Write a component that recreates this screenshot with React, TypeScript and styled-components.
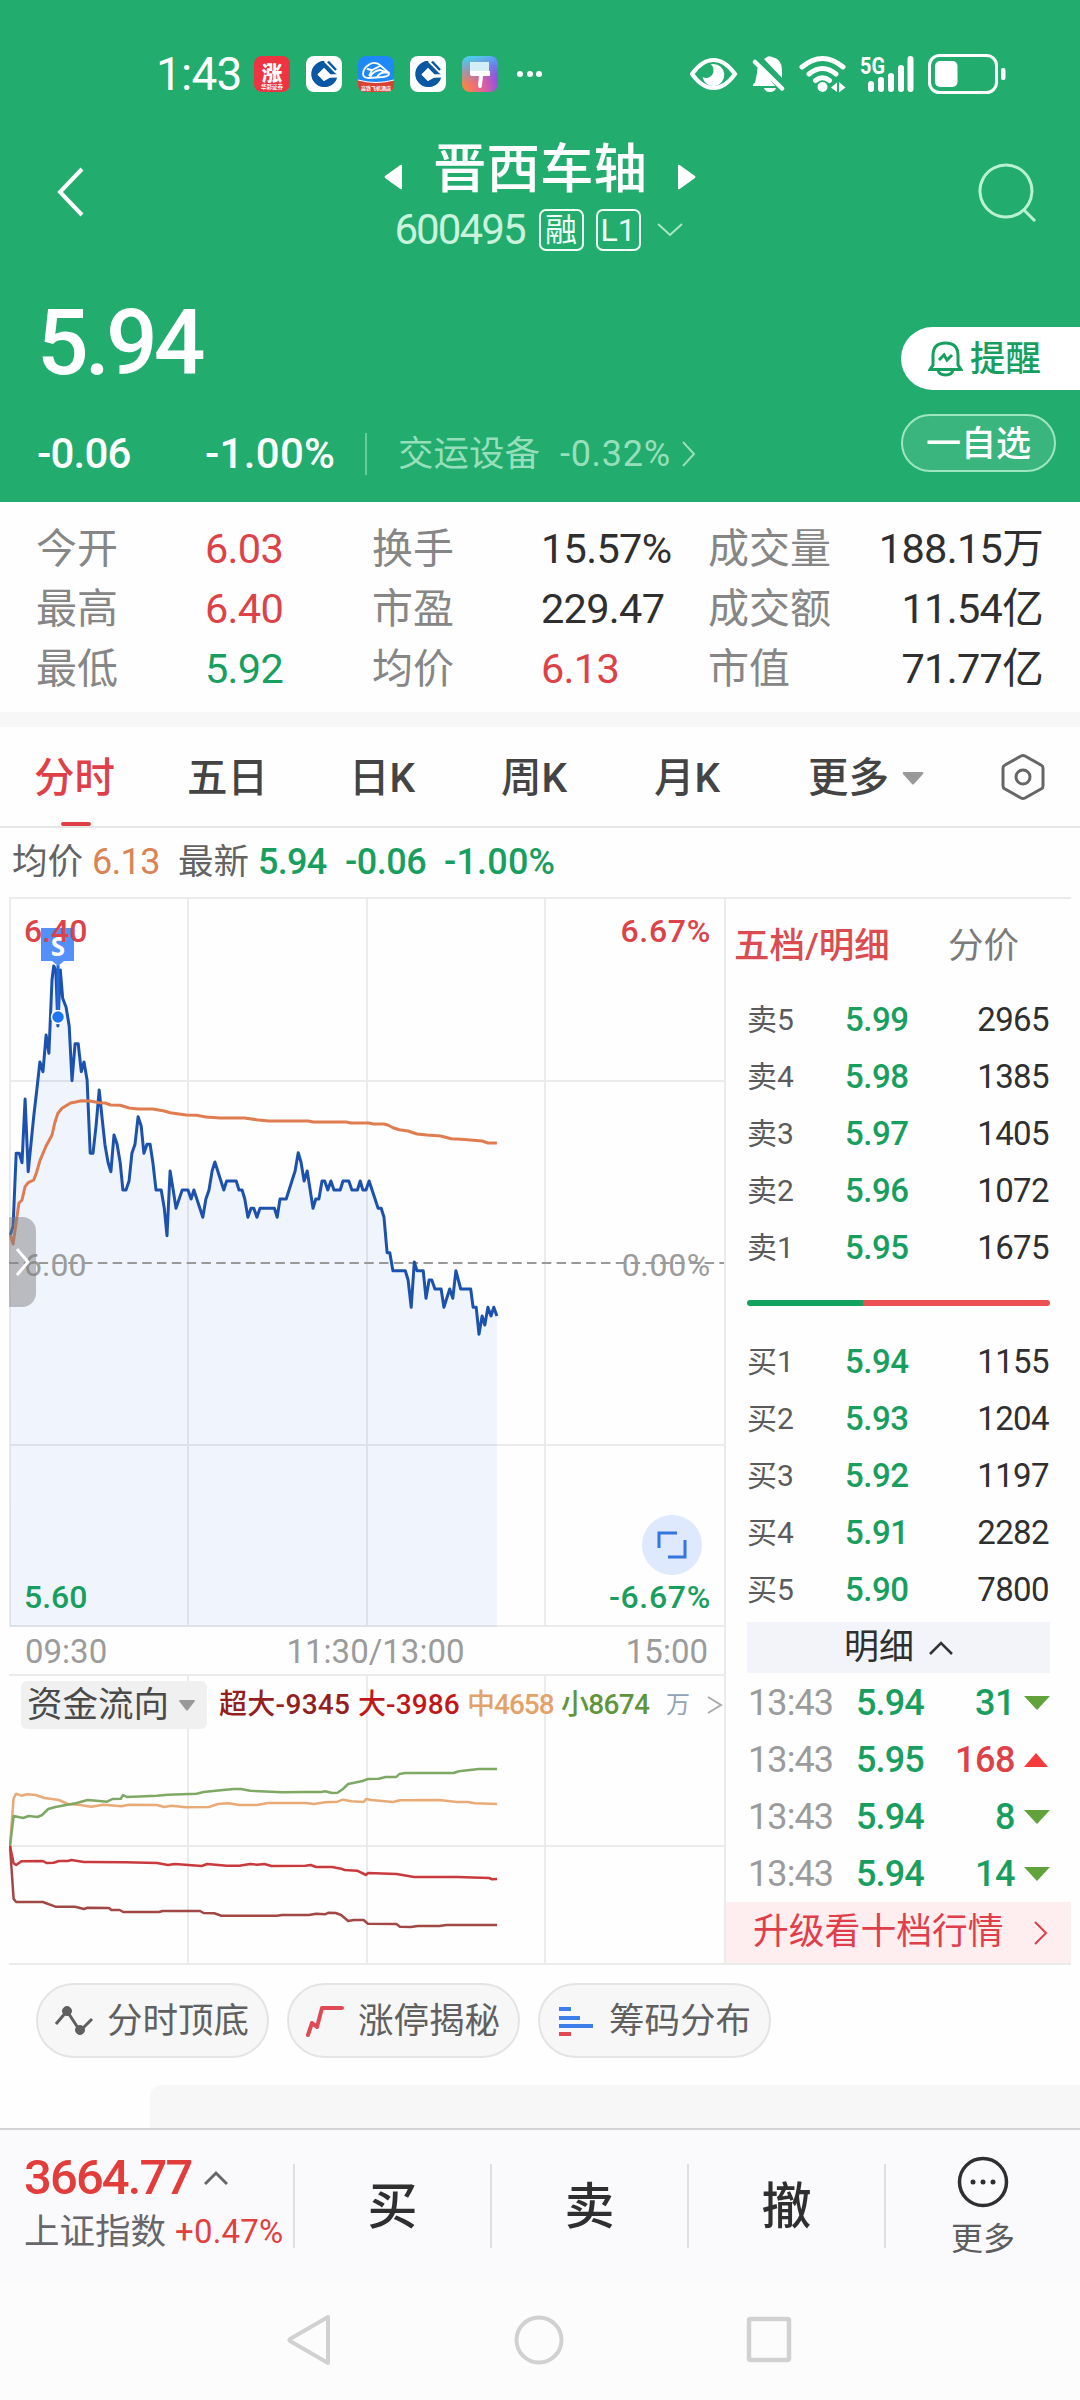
import React from "react";
import styled, { createGlobalStyle } from "styled-components";

const c = {
  green: "#22ac6e",
  down: "#189f5f",
  up: "#dc4248",
  text: "#2f2f2f",
  gray: "#868686",
  light: "#9b9b9b",
  line: "#ebebeb",
  mint: "#97dfba",
};

const Global = createGlobalStyle`
  * { box-sizing: border-box; }
  body { margin: 0; background: #fdfdfd; }
  svg { display: block; flex: none; }
`;

const Screen = styled.div`
  width: 1080px;
  height: 2400px;
  overflow: hidden;
  display: flex;
  flex-direction: column;
  background: #fefefe;
  color: ${c.text};
  font-family: Roboto, "Noto Sans CJK SC", sans-serif;
  white-space: nowrap;
`;

/* text run with the few things that vary between uses */
const T = styled.span<{ $s: number; $c?: string; $w?: number; $ls?: number; $width?: number; $ml?: number }>`
  flex: none;
  font-size: ${(p) => p.$s}px;
  color: ${(p) => p.$c ?? "inherit"};
  font-weight: ${(p) => p.$w ?? 400};
  letter-spacing: ${(p) => p.$ls ?? 0}px;
  width: ${(p) => (p.$width ? p.$width + "px" : "auto")};
  margin-left: ${(p) => p.$ml ?? 0}px;
`;

/* ---------- header ---------- */
const Header = styled.header`
  height: 502px;
  flex: none;
  background: ${c.green};
  color: #fff;
  display: flex;
  flex-direction: column;
`;
const StatusBar = styled.div`
  height: 96px;
  margin-top: 26px;
  padding: 0 74px 0 156px;
  display: flex;
  align-items: center;
  justify-content: space-between;
`;
const Group = styled.div<{ $gap?: number }>`
  display: flex;
  align-items: center;
  gap: ${(p) => p.$gap ?? 0}px;
`;
const AppIcons = styled(Group)`
  margin-left: 12px;
`;
const TitleBar = styled.div`
  height: 140px;
  padding: 0 42px 0 56px;
  display: flex;
  align-items: center;
  justify-content: space-between;
`;
const TitleBlock = styled.div`
  display: flex;
  flex-direction: column;
  align-items: center;
  margin-left: 18px;
  padding-top: 5px;
`;
const NameRow = styled.div`
  display: flex;
  align-items: center;
  gap: 31px;
  height: 74px;
  line-height: 74px;
  svg { margin-top: 14px; }
`;
const CodeRow = styled.div`
  display: flex;
  align-items: center;
  height: 46px;
  line-height: 44px;
  margin: 0 3px 4px 0;
`;
const Tag = styled.span<{ $ml: number }>`
  width: 45px;
  height: 42px;
  margin-left: ${(p) => p.$ml}px;
  border: 2px solid #effff6;
  border-radius: 7px;
  font-size: 32px;
  line-height: 38px;
  text-align: center;
  color: #effff6;
`;
const Quote = styled.div`
  display: flex;
  justify-content: space-between;
  height: 240px;
`;
const QuoteLeft = styled.div`
  padding-left: 37px;
  display: flex;
  flex-direction: column;
`;
const Price = styled.div`
  font-size: 91px;
  font-weight: 500;
  line-height: 100px;
  letter-spacing: -4px;
  margin-top: 31px;
`;
const ChangeRow = styled.div`
  display: flex;
  align-items: center;
  height: 60px;
  line-height: 60px;
  margin-top: 31px;
`;
const Divider = styled.i<{ $h: number; $c: string; $mr?: number }>`
  flex: none;
  width: 2px;
  height: ${(p) => p.$h}px;
  background: ${(p) => p.$c};
  margin-right: ${(p) => p.$mr ?? 0}px;
`;
const QuoteActions = styled.div`
  width: 179px;
  padding-top: 65px;
  display: flex;
  flex-direction: column;
  gap: 24px;
`;
const RemindButton = styled.div`
  height: 63px;
  border-radius: 32px 0 0 32px;
  background: #fff;
  color: ${c.down};
  display: flex;
  align-items: center;
  padding-left: 27px;
  gap: 7px;
  font-size: 35.5px;
  font-weight: 500;
  line-height: 66px;
`;
const WatchButton = styled.div`
  width: 155px;
  height: 58px;
  border: 2px solid #9ee6c0;
  border-radius: 29px;
  background: #39b57d;
  font-size: 35px;
  font-weight: 500;
  line-height: 57px;
  text-align: center;
`;

/* ---------- stats ---------- */
const Stats = styled.section`
  height: 210px;
  flex: none;
  padding: 16px 37px 0 36px;
  display: grid;
  grid-template-columns: 168px 168px 168px 168px 335px;
  grid-auto-rows: 60px;
  line-height: 62px;
  font-size: 41px;
`;
const Label = styled.span`
  color: ${c.gray};
`;
const Value = styled.span<{ $c?: string }>`
  color: ${(p) => p.$c ?? c.text};
  font-size: 41.5px;
  letter-spacing: -0.7px;
  padding-left: 1px;
`;
const LastPair = styled.div`
  display: flex;
  justify-content: space-between;
`;
const Gap = styled.div`
  height: 15px;
  flex: none;
  background: #f7f7f7;
`;

/* ---------- tabs ---------- */
const Tabs = styled.nav`
  height: 101px;
  flex: none;
  border-bottom: 2px solid #e6e6e6;
  display: flex;
  align-items: center;
  padding-left: 34px;
  font-size: 40.5px;
  line-height: 99px;
  color: #444;
  font-weight: 500;
`;
const Tab = styled.span<{ $w: number; $active?: boolean }>`
  flex: none;
  width: ${(p) => p.$w}px;
  height: 99px;
  display: flex;
  align-items: center;
  gap: 13px;
  position: relative;
  padding-top: 4px;
  color: ${(p) => (p.$active ? "#df4048" : "inherit")};
  &::after {
    content: "";
    display: ${(p) => (p.$active ? "block" : "none")};
    position: absolute;
    left: 27px;
    bottom: 0;
    width: 30px;
    height: 4px;
    border-radius: 2px;
    background: #df4048;
  }
`;
const Info = styled.div`
  height: 69px;
  flex: none;
  padding-left: 12px;
  display: flex;
  align-items: center;
  line-height: 71px;
`;

/* ---------- chart and order book ---------- */
const Board = styled.main`
  height: 1068px;
  flex: none;
  margin: 0 9px;
  display: flex;
  border-top: 2px solid ${c.line};
  border-bottom: 2px solid ${c.line};
`;
const Charts = styled.section`
  width: 717px;
  flex: none;
  border-right: 2px solid ${c.line};
`;
const PriceChart = styled.div`
  height: 728px;
  position: relative;
`;
const Mark = styled.span<{ $top: number; $c: string; $right?: boolean }>`
  position: absolute;
  top: ${(p) => p.$top}px;
  ${(p) => (p.$right ? "right: 13px; letter-spacing: 0.7px;" : "left: 15px;")}
  font-size: 32px;
  line-height: 34px;
  color: ${(p) => p.$c};
  font-weight: ${(p) => (p.$c === c.light ? 400 : 500)};
`;
const Drawer = styled.div`
  position: absolute;
  left: 0;
  top: 318px;
  width: 27px;
  height: 90px;
  padding-left: 6px;
  border-radius: 0 14px 14px 0;
  background: rgba(125, 125, 125, 0.48);
  display: flex;
  align-items: center;
`;
const Expand = styled.div`
  position: absolute;
  left: 633px;
  top: 616px;
  width: 60px;
  height: 60px;
  border-radius: 50%;
  background: #dee9fd;
  display: grid;
  place-items: center;
`;
const TimeAxis = styled.div`
  height: 49px;
  padding: 0 16px 0 16px;
  border-bottom: 2px solid ${c.line};
  display: flex;
  justify-content: space-between;
  color: ${c.light};
  font-size: 33px;
  line-height: 50px;
  span:nth-child(2) { margin-left: 18px; }
`;
const FlowChart = styled.div`
  height: 287px;
  position: relative;
`;
const FlowHead = styled.div`
  position: absolute;
  left: 12px;
  top: 5px;
  height: 48px;
  width: 705px;
  display: flex;
  align-items: center;
  line-height: 50px;
`;
const FlowPick = styled.div`
  width: 186px;
  height: 48px;
  flex: none;
  margin-right: 12px;
  border-radius: 6px;
  background: #f0f0f0;
  color: #4a4a4a;
  font-size: 35.5px;
  display: flex;
  align-items: center;
  padding-left: 6px;
  gap: 10px;
  line-height: 47px;
`;
const Book = styled.aside`
  width: 345px;
  display: flex;
  flex-direction: column;
`;
const BookTabs = styled.div`
  height: 90px;
  padding-left: 8px;
  display: flex;
  align-items: center;
  line-height: 90px;
  padding-top: 4px;
`;
const Level = styled.div`
  height: 57px;
  padding: 0 22px 0 21px;
  display: grid;
  grid-template-columns: 98px 90px 1fr;
  line-height: 61px;
  color: #5b5b5b;
  font-size: 30px;
`;
const LevelPrice = styled.span`
  font-size: 33px;
  font-weight: 500;
  letter-spacing: -0.5px;
  color: ${c.down};
`;
const LevelVolume = styled.span`
  font-size: 33px;
  text-align: right;
  letter-spacing: -0.6px;
  color: ${c.text};
`;
const Ratio = styled.div`
  height: 57px;
  padding: 0 21px;
  display: flex;
  align-items: center;
`;
const Bar = styled.i<{ $w: number; $c: string; $side: "l" | "r" }>`
  width: ${(p) => p.$w}px;
  height: 6px;
  background: ${(p) => p.$c};
  border-radius: ${(p) => (p.$side === "l" ? "3px 0 0 3px" : "0 3px 3px 0")};
`;
const DetailHead = styled.div`
  height: 51px;
  margin: 6px 21px 1px;
  background: #f2f4f9;
  display: flex;
  align-items: center;
  justify-content: center;
  gap: 15px;
  font-size: 35px;
  line-height: 54px;
`;
const Trade = styled.div`
  height: 57px;
  padding: 1px 21px 0 22px;
  display: flex;
  align-items: center;
  line-height: 57px;
  font-size: 36px;
`;
const TradeVolume = styled.span<{ $up?: boolean }>`
  flex: 1;
  text-align: right;
  padding-right: 9px;
  letter-spacing: -0.5px;
  font-weight: 500;
  color: ${(p) => (p.$up ? c.up : c.down)};
`;
const Upgrade = styled.div`
  height: 61px;
  margin-top: auto;
  padding: 0 23px 0 27px;
  background: #ffeef0;
  color: #df3f4a;
  font-size: 35.8px;
  line-height: 65px;
  display: flex;
  align-items: center;
  justify-content: space-between;
`;

/* ---------- below the charts ---------- */
const Tools = styled.div`
  height: 120px;
  flex: none;
  padding: 18px 36px 0;
  display: flex;
  gap: 18px;
`;
const Tool = styled.div`
  width: 233px;
  height: 75px;
  border: 2px solid #e4e4e4;
  border-radius: 38px;
  background: #f7f7f7;
  color: #606060;
  font-size: 35.5px;
  line-height: 72px;
  display: flex;
  align-items: center;
  padding-left: 16px;
  gap: 13px;
`;
const NextCard = styled.div`
  height: 43px;
  flex: none;
  margin-left: 150px;
  background: #f7f7f7;
  border-radius: 12px 0 0 0;
`;

/* ---------- bottom ---------- */
const TradeBar = styled.footer`
  height: 153px;
  flex: none;
  border-top: 2px solid #d2d4d3;
  background: #fafafc;
  display: flex;
  align-items: center;
`;
const IndexBox = styled.div`
  width: 293px;
  padding: 0 0 0 24px;
  display: flex;
  flex-direction: column;
`;
const IndexRow = styled.div<{ $h: number }>`
  display: flex;
  align-items: center;
  height: ${(p) => p.$h}px;
  line-height: ${(p) => p.$h}px;
`;
const Action = styled.div`
  width: 195px;
  padding-top: 3px;
  text-align: center;
  font-size: 50px;
  font-weight: 500;
  line-height: 84px;
`;
const More = styled.div`
  flex: 1;
  display: flex;
  flex-direction: column;
  align-items: center;
  gap: 8px;
  padding-top: 6px;
  font-size: 32px;
  line-height: 46px;
  color: #5d5d5d;
`;
const NavBar = styled.div`
  flex: 1;
  background: #fcfcfc;
  display: flex;
  justify-content: space-between;
  padding: 33px 287px 0 286px;
`;

/* maps "x,y" samples onto chart pixels */
const scale = (pts: string, sx: number, dx: number, dy: number) =>
  pts
    .split(" ")
    .map((p) => {
      const [x, y] = p.split(",").map(Number);
      return `${(x / sx - dx).toFixed(1)},${(y / 3 - dy).toFixed(1)}`;
    })
    .join(" ");

const priceLine = scale(
  "30,1035 38,1008 47,790 56,790 64,818 73,627 82,845 98,680 107,600 116,516 125,545 134,435 142,490 151,270 156,228 162,240 168,408 175,240 182,325 192,352 201,408 209,572 218,461 227,461 236,545 244,516 253,570 262,790 270,790 279,706 288,600 297,690 305,765 314,818 322,845 331,735 340,763 349,818 357,900 366,900 375,872 383,790 392,763 401,680 410,708 418,790 427,763 436,763 444,818 453,900 468,900 477,955 485,1037 494,843 503,900 511,955 529,900 546,900 555,927 563,900 589,982 598,927 607,900 616,843 624,816 650,900 658,873 686,873 694,900 703,900 711,927 720,982 729,955 737,955 746,982 755,955 797,955 805,982 813,927 831,927 848,872 857,843 866,788 874,816 883,873 892,843 909,955 917,927 926,927 935,873 943,873 952,900 961,873 970,900 988,900 996,873 1013,873 1022,900 1038,900 1046,873 1054,900 1063,900 1072,873 1098,955 1107,955 1115,982 1124,1088 1132,1088 1141,1142 1177,1142 1185,1170 1194,1252 1203,1116 1211,1142 1229,1142 1237,1225 1246,1170 1254,1170 1263,1197 1281,1197 1289,1252 1306,1197 1315,1225 1324,1142 1338,1197 1367,1197 1374,1252 1383,1252 1391,1333 1400,1278 1408,1305 1417,1252 1426,1278 1434,1252 1443,1278",
  2.904, 9, 9
);
const averageLine = scale(
  "30,1035 38,1062 55,940 64,930 73,890 82,878 98,870 107,845 116,812 134,768 151,735 160,695 168,670 180,655 205,639 220,636 236,632 262,633 288,638 305,639 322,645 349,646 375,654 401,657 444,657 477,663 494,668 540,675 571,676 598,681 640,684 710,684 745,689 780,693 895,693 910,696 1005,696 1020,699 1070,699 1085,702 1115,702 1128,706 1141,713 1160,719 1185,723 1211,732 1240,735 1280,738 1310,746 1340,748 1400,753 1417,759 1443,759",
  2.904, 9, 9
);
const flows: [string, string][] = [
  ["#e8ab78", "28,738 38,595 45,581 60,587 75,583 100,585 125,594 165,600 190,612 225,615 255,620 290,614 340,619 360,614 440,615 460,621 480,617 520,622 585,621 610,612 640,610 670,615 720,615 750,609 855,609 880,612 910,607 945,605 960,599 985,604 1018,606 1025,597 1040,600 1100,606 1120,601 1230,600 1280,606 1310,606 1330,610 1392,612"],
  ["#7fa865", "28,738 38,648 65,654 80,648 105,651 118,645 135,627 155,621 170,618 215,609 245,600 270,602 300,605 315,597 338,596 345,585 355,591 440,587 470,584 550,581 570,576 625,570 655,567 675,567 700,572 790,577 850,576 900,576 910,574 930,579 945,578 960,567 975,552 1015,543 1030,537 1060,536 1080,531 1110,531 1118,522 1135,519 1270,519 1285,514 1340,507 1392,507"],
  ["#a14746", "28,738 38,896 45,906 120,906 155,920 210,920 235,927 245,923 305,924 312,930 335,930 345,936 445,936 455,933 560,933 570,939 600,940 620,947 775,947 790,945 865,945 885,941 910,943 920,938 940,939 955,945 975,963 990,960 1018,960 1030,971 1110,972 1120,980 1150,981 1170,978 1230,978 1250,975 1392,975"],
  ["#c83a3d", "28,738 38,790 45,795 60,784 120,783 130,789 150,788 165,783 190,783 200,780 235,786 250,786 350,787 440,789 470,795 490,792 565,798 580,792 635,797 670,797 700,792 720,794 740,792 760,798 855,797 870,795 885,801 930,801 955,806 965,810 1000,812 1025,825 1030,819 1110,822 1160,831 1280,831 1370,834 1378,838 1392,837"],
];

const Poly = ({ w, h, d, s = 2, color = "currentColor" }: { w: number; h: number; d: string; s?: number; color?: string }) => (
  <svg width={w} height={h} viewBox={`0 0 ${w} ${h}`} fill="none" stroke={color} strokeWidth={s}>
    <path d={d} />
  </svg>
);
const Tri = ({ w, h, d, color = "#fff" }: { w: number; h: number; d: string; color?: string }) => (
  <svg width={w} height={h} viewBox={`0 0 ${w} ${h}`} fill={color}>
    <path d={d} />
  </svg>
);

const BankIcon = () => (
  <svg width="36" height="36" viewBox="0 0 36 36">
    <rect width="36" height="36" rx="8" fill="#fff" />
    <path fill="#0a57a4" d="M18 5A13 13 0 1 0 31 21.500H26L18 29L7.500 18.500L18 8L20 10Z" />
    <path fill="#0a57a4" d="M18 5A13 13 0 1 0 31 21.500H24.500L18 25L11.500 18.500L18 12L24.500 18.500H31L19 6Z" />
    <path fill="#fff" d="M18 12l6.500 6.500-6.500 6.500-6.500-6.500zM23 18.500H32V21.500H23z" />
    <path stroke="#fff" strokeWidth="1.200" d="M18.500 5.500L30 17" />
    <path stroke="#0a57a4" strokeWidth="2.500" d="M22 5.500l8 8.500" />
  </svg>
);

const StatusIcons = () => (
  <svg width="316" height="40" viewBox="690 53 316 40" fill="none" stroke="#fff">
    <path strokeWidth="4" d="M692 73Q702 59 713.500 59T735 73Q725 87 713.500 87T692 73Z" />
    <path fill="#fff" stroke="none" d="M713 63a11 11 0 1 1-10.500 13a7.500 7.500 0 0 0 11-7q0-4-3-5.500z" />
    <g fill="#fff" stroke="none">
      <path d="M764 58q2-1 3-2q2-1.500 5 0q10 2 10 13v8zM759 64q-2 3-2 8l-2 10q-2 0-2 3h22z" />
      <path d="M764 87h12q-1 4-6 4t-6-4z" />
    </g>
    <path strokeWidth="4.500" strokeLinecap="round" d="M755 61l27 26.500" />
    <path strokeWidth="5" strokeLinecap="round" d="M802 66q20.500-17 41 0M809 73q13.500-11 27 0M815.500 79.500q7-5.500 14 0" />
    <circle cx="822.500" cy="86" r="5" fill="#fff" stroke="none" />
    <path fill="#fff" stroke="none" d="M831 86.500l6-5v9.500zM839 81l6.500 5.500-6.500 5z" />
    <path strokeWidth="6" strokeLinecap="round" d="M871 83v5M881 79v9M891 75v13M901 67v21M910.500 58v30" />
    <rect x="929.500" y="54.500" width="67" height="37" rx="10" strokeWidth="3" />
    <rect x="935" y="60" width="22.500" height="26" rx="5" fill="#fff" stroke="none" />
    <rect x="1001" y="67" width="4.500" height="12" rx="2" fill="#fff" stroke="none" />
    <text x="860" y="73" fill="#fff" stroke="none" fontFamily="Roboto, sans-serif" fontSize="23" fontWeight="700" textLength="25" lengthAdjust="spacingAndGlyphs">5G</text>
  </svg>
);

const stats = [
  ["今开", "6.03", c.up, "换手", "15.57%", c.text, "成交量", "188.15万"],
  ["最高", "6.40", c.up, "市盈", "229.47", c.text, "成交额", "11.54亿"],
  ["最低", "5.92", c.down, "均价", "6.13", c.up, "市值", "71.77亿"],
];
const sells = [["卖5", "5.99", "2965"], ["卖4", "5.98", "1385"], ["卖3", "5.97", "1405"], ["卖2", "5.96", "1072"], ["卖1", "5.95", "1675"]];
const buys = [["买1", "5.94", "1155"], ["买2", "5.93", "1204"], ["买3", "5.92", "1197"], ["买4", "5.91", "2282"], ["买5", "5.90", "7800"]];
const trades: [string, string, boolean][] = [["5.94", "31", false], ["5.95", "168", true], ["5.94", "8", false], ["5.94", "14", false]];

const Levels = ({ rows }: { rows: string[][] }) => (
  <>
    {rows.map(([n, p, v]) => (
      <Level key={n}>
        <span>{n}</span>
        <LevelPrice>{p}</LevelPrice>
        <LevelVolume>{v}</LevelVolume>
      </Level>
    ))}
  </>
);

export default function App() {
  return (
    <Screen>
      <Global />
      <Header>
        <StatusBar>
          <Group>
            <T $s={46} $ls={-0.8}>1:43</T>
            <AppIcons $gap={16}>
              <svg width="36" height="36" viewBox="0 0 36 36">
                <rect width="36" height="36" rx="8" fill="#ee3441" />
                <text x="18" y="24.500" textAnchor="middle" fill="#fff" fontSize="20.500" fontWeight="900" fontFamily="Noto Sans CJK SC, sans-serif">涨</text>
                <text x="18" y="33" textAnchor="middle" fill="#fff" fontSize="5.500" fontWeight="700" fontFamily="Noto Sans CJK SC, sans-serif">华彩证券</text>
              </svg>
              <BankIcon />
              <svg width="36" height="36" viewBox="0 0 36 36">
                <rect width="36" height="36" rx="8" fill="#1f88f8" />
                <path fill="#d84232" d="M0 24q18 5 36 0v4q0 8-8 8H8q-8 0-8-8z" />
                <path stroke="#fff" fill="none" d="M0 24q18 5 36 0" />
                <path stroke="#fff" strokeWidth="1.800" fill="none" d="M5 18q0-6 7-10q6-3 11 2l8 7q1 3-6 4l-14 1q-6 0-6-4zM9 13l5 1 8-4M12 21q3-6 10-7l8 3q-7-2-11 4M14 14l-3 6" />
                <text x="18" y="33.500" textAnchor="middle" fill="#fff" fontSize="5" fontWeight="700" fontFamily="Noto Sans CJK SC, sans-serif">高铁飞机酒店</text>
              </svg>
              <BankIcon />
              <svg width="36" height="36" viewBox="0 0 36 36">
                <defs>
                  <linearGradient id="brushA" x1="0" y1="0.900" x2="1" y2="0.600">
                    <stop offset="0" stopColor="#ff8a3c" />
                    <stop offset="0.550" stopColor="#e0609a" />
                    <stop offset="1" stopColor="#8a50e8" />
                  </linearGradient>
                  <linearGradient id="brushB" x1="0.300" y1="0" x2="0.500" y2="0.800">
                    <stop offset="0" stopColor="#48d0f0" />
                    <stop offset="0.900" stopColor="#48a0f0" stopOpacity="0" />
                  </linearGradient>
                </defs>
                <rect width="36" height="36" rx="8" fill="url(#brushA)" />
                <rect width="36" height="36" rx="8" fill="url(#brushB)" />
                <path fill="#d4eef8" d="M8 6h19v9H8z" />
                <path fill="#fff" d="M8 15h20v4q0 1-1 1h-6l-1 9q0 3-2 3t-2-3l1-9h-7q-2 0-2-2z" />
              </svg>
              <svg width="28" height="8" viewBox="0 0 28 8" fill="#fff">
                <circle cx="6" cy="4" r="3" /><circle cx="16" cy="4" r="3" /><circle cx="25" cy="4" r="3" />
              </svg>
            </AppIcons>
          </Group>
          <StatusIcons />
        </StatusBar>
        <TitleBar>
          <Poly w={28} h={50} s={4} d="M26 2L4 25L26 48" />
          <TitleBlock>
            <NameRow>
              <Tri w={18} h={26} d="M18 1v24Q17 26 15 24L1 14Q0 13 1 12L15 2Q17 0 18 1Z" />
              <T $s={53.5} $w={500}>晋西车轴</T>
              <Tri w={18} h={26} d="M0 1v24Q1 26 3 24L17 14Q18 13 17 12L3 2Q1 0 0 1Z" />
            </NameRow>
            <CodeRow>
              <T $s={42} $ls={-1.9} $c="#c9f3dc">600495</T>
              <Tag $ml={14}>融</Tag>
              <Tag $ml={12}>L1</Tag>
              <T $s={10} $ml={16}>
                <Poly w={26} h={14} color="#a8e8c6" d="M1 1L13 12L25 1" />
              </T>
            </CodeRow>
          </TitleBlock>
          <Poly w={60} h={60} s={3} color="#b9f2d2" d="M28 3A26 26 0 1 1 27.900 3M45 47L57 59" />
        </TitleBar>
        <Quote>
          <QuoteLeft>
            <Price>5.94</Price>
            <ChangeRow>
              <T $s={42} $w={500} $ls={-0.8} $width={168}>-0.06</T>
              <T $s={42} $w={500} $ls={0.3} $width={160}>-1.00%</T>
              <Divider $h={42} $c="#6ccb9c" $mr={31} />
              <T $s={35.5} $c={c.mint}>交运设备</T>
              <T $s={36} $c={c.mint} $ml={20} $ls={0.7} $width={121}>-0.32%</T>
              <Poly w={15} h={26} color={c.mint} d="M2 1L13 13L2 25" />
            </ChangeRow>
          </QuoteLeft>
          <QuoteActions>
            <RemindButton>
              <svg width="35" height="36" viewBox="0 0 35 36" fill="none" stroke={c.down} strokeWidth="3">
                <path d="M2 28.500H33L30 24V14.500Q30 2 17.500 2T5 14.500V24ZM10 29Q11 34 17.500 34T25 29" />
                <path d="M11 19l5-5 3 5 5-5" />
              </svg>
              提醒
            </RemindButton>
            <WatchButton>一自选</WatchButton>
          </QuoteActions>
        </Quote>
      </Header>

      <Stats>
        {stats.map(([a, av, ac, b, bv, bc, d, dv]) => (
          <React.Fragment key={a}>
            <Label>{a}</Label>
            <Value $c={ac}>{av}</Value>
            <Label>{b}</Label>
            <Value $c={bc}>{bv}</Value>
            <LastPair>
              <Label>{d}</Label>
              <Value>{dv}</Value>
            </LastPair>
          </React.Fragment>
        ))}
      </Stats>
      <Gap />
      <Tabs>
        <Tab $w={153} $active>分时</Tab>
        <Tab $w={162}>五日</Tab>
        <Tab $w={152}>日K</Tab>
        <Tab $w={153}>周K</Tab>
        <Tab $w={154}>月K</Tab>
        <Tab $w={193}>
          更多
          <Tri w={22} h={13} color="#999" d="M2 0H20Q22 0 21 2L12 12Q11 13 10 12L1 2Q0 0 2 0Z" />
        </Tab>
        <svg width="44" height="48" viewBox="0 0 44 48" fill="none" stroke="#666" strokeWidth="3">
          <path strokeLinejoin="round" d="M20 3Q22 2 24 3L40 12Q42 13 42 15V33Q42 35 40 36L24 45Q22 46 20 45L4 36Q2 35 2 33V15Q2 13 4 12Z" />
          <circle cx="22" cy="24" r="7" />
        </svg>
      </Tabs>
      <Info>
        <T $s={35.5} $c="#636363" $width={80}>均价</T>
        <T $s={36} $c="#da8353" $width={86} $ls={-0.6}>6.13</T>
        <T $s={35.5} $c="#636363" $width={80}>最新</T>
        <T $s={36} $c={c.down} $w={500} $ls={-0.7} $width={87}>5.94</T>
        <T $s={36} $c={c.down} $w={500} $ls={-0.5} $width={99}>-0.06</T>
        <T $s={36} $c={c.down} $w={500} $ls={0.2}>-1.00%</T>
      </Info>

      <Board>
        <Charts>
          <PriceChart>
            <svg width="715" height="728" viewBox="0 0 715 728" fill="none">
              <polygon fill="#eff4fd" points={`1,728 ${priceLine} 488,728`} />
              <path stroke="#000" strokeOpacity="0.075" strokeWidth="2" d="M1 0V728M179 0V728M358 0V728M536 0V728M0 182H715M0 546H715M0 727H715" />
              <path stroke="#999" strokeWidth="2" strokeDasharray="9.500 5.300" d="M0 364H715" />
              <polyline stroke="#1c52ae" strokeWidth="3" strokeLinejoin="round" points={priceLine} />
              <polyline stroke="#df7d51" strokeWidth="3" strokeLinejoin="round" points={averageLine} />
              <path stroke="#2068dd" strokeWidth="3" d="M49 66V112" />
              <path fill="#5390fa" d="M32 29H65V62H55L49 67L43 62H32Z" />
              <circle cx="49" cy="118" r="6.500" fill="#2176f4" stroke="#fff" strokeWidth="1.500" />
              <text x="49" y="57" textAnchor="middle" fill="#fff" fontSize="26" fontWeight="700" fontFamily="Noto Sans, sans-serif">S</text>
            </svg>
            <Mark $top={15} $c={c.up}>6.40</Mark>
            <Mark $top={15} $c={c.up} $right>6.67%</Mark>
            <Mark $top={349} $c={c.light}>6.00</Mark>
            <Mark $top={349} $c={c.light} $right>0.00%</Mark>
            <Mark $top={681} $c={c.down}>5.60</Mark>
            <Mark $top={681} $c={c.down} $right>-6.67%</Mark>
            <Drawer>
              <Poly w={16} h={30} s={3} color="#fff" d="M2 2L13 15L2 28" />
            </Drawer>
            <Expand>
              <Poly w={30} h={30} s={3} color="#3475e0" d="M20 3H2V18M28 10V27H11" />
            </Expand>
          </PriceChart>
          <TimeAxis>
            <span>09:30</span>
            <span>11:30/13:00</span>
            <span>15:00</span>
          </TimeAxis>
          <FlowChart>
            <svg width="715" height="287" viewBox="0 0 715 287" fill="none">
              <path stroke={c.line} strokeWidth="2" d="M179 0V287M358 0V287M536 0V287M0 170H715" />
              {flows.map(([color, pts]) => (
                <polyline key={color} stroke={color} strokeWidth="2.500" strokeLinejoin="round" points={scale(pts, 2.8, 9, 76)} />
              ))}
            </svg>
            <FlowHead>
              <FlowPick>
                资金流向
                <Tri w={16} h={11} color="#999" d="M1 0H15Q16 0 16 1L9 10Q8 11 7 10L0 1Q0 0 1 0Z" />
              </FlowPick>
              <T $s={28} $w={500} $c="#92201f" $ls={0.3} $width={139}>超大-9345</T>
              <T $s={28} $w={500} $c="#c01718" $ls={0.1} $width={109}>大-3986</T>
              <T $s={28} $w={500} $c="#e3a269" $ls={-1} $width={94}>中4658</T>
              <T $s={28} $w={500} $c="#60953c" $ls={-0.7} $width={105}>小8674</T>
              <T $s={24} $c="#93a3b3" $width={41}>万</T>
              <Poly w={16} h={20} color="#aaa" d="M1 2L14 10L1 18" />
            </FlowHead>
          </FlowChart>
        </Charts>
        <Book>
          <BookTabs>
            <T $s={35.5} $c="#db4b50" $w={500} $width={214}>五档/明细</T>
            <T $s={35.5} $c="#7b7b7b">分价</T>
          </BookTabs>
          <Levels rows={sells} />
          <Ratio>
            <Bar $w={116} $c="#11a35f" $side="l" />
            <Bar $w={187} $c="#ec5053" $side="r" />
          </Ratio>
          <Levels rows={buys} />
          <DetailHead>
            明细
            <Poly w={24} h={14} s={2.5} color="#333" d="M1 13L12 2L23 13" />
          </DetailHead>
          {trades.map(([p, v, up], i) => (
            <Trade key={i}>
              <T $s={36} $c={c.light} $width={108} $ls={-0.9}>13:43</T>
              <T $s={36} $c={c.down} $w={500} $ls={-0.9}>{p}</T>
              <TradeVolume $up={up}>{v}</TradeVolume>
              <Tri w={26} h={14} color={up ? "#f33b3b" : "#61a23c"} d={up ? "M12 0L24 14H0Z" : "M0 0H26L13 14Z"} />
            </Trade>
          ))}
          <Upgrade>
            升级看十档行情
            <Poly w={14} h={24} d="M1 1L12 12L1 23" />
          </Upgrade>
        </Book>
      </Board>

      <Tools>
        <Tool>
          <svg width="40" height="34" viewBox="0 0 40 34" fill="#606060" stroke="#606060">
            <path fill="none" strokeWidth="3" d="M2 20L13 7L26 27L38 15" />
            <circle cx="13" cy="7" r="4.500" /><circle cx="26" cy="26" r="4.500" />
          </svg>
          分时顶底
        </Tool>
        <Tool>
          <svg width="40" height="34" viewBox="0 0 40 34" fill="none" stroke="#e04a55" strokeWidth="4" strokeLinecap="round" strokeLinejoin="round">
            <path d="M3 31L7 19L12 23L17 4H37" />
          </svg>
          涨停揭秘
        </Tool>
        <Tool>
          <svg width="40" height="34" viewBox="0 0 40 34" fill="none" stroke="#3f7de8" strokeWidth="4">
            <path d="M3 5H15M3 14H24M3 22H37" />
            <path stroke="#e04a55" d="M3 30H15" />
          </svg>
          筹码分布
        </Tool>
      </Tools>
      <NextCard />
      <TradeBar>
        <IndexBox>
          <IndexRow $h={52}>
            <T $s={49} $w={500} $c="#e23d3b" $ls={-1.9} $width={180}>3664.77</T>
            <Poly w={24} h={16} s={3} color="#666" d="M1 14L12 3L23 14" />
          </IndexRow>
          <IndexRow $h={56}>
            <T $s={35.5} $c="#67676b" $width={151}>上证指数</T>
            <T $s={33} $c="#e0403e" $ls={0.2}>+0.47%</T>
          </IndexRow>
        </IndexBox>
        <Divider $h={84} $c="#dedfe1" />
        <Action>买</Action>
        <Divider $h={84} $c="#dedfe1" />
        <Action>卖</Action>
        <Divider $h={84} $c="#dedfe1" />
        <Action>撤</Action>
        <Divider $h={84} $c="#dedfe1" />
        <More>
          <svg width="52" height="52" viewBox="0 0 52 52" fill="#2f2f2f">
            <circle cx="26" cy="26" r="23.500" fill="none" stroke="#2f2f2f" strokeWidth="3.500" />
            <circle cx="16" cy="26" r="2.500" /><circle cx="26" cy="26" r="2.500" /><circle cx="36" cy="26" r="2.500" />
          </svg>
          更多
        </More>
      </TradeBar>
      <NavBar>
        <svg width="46" height="52" viewBox="0 0 46 52" fill="none" stroke="#d1d1d1" strokeWidth="4" strokeLinejoin="round">
          <path d="M42 3V49L4 27Q3 26 4 25Z" />
        </svg>
        <svg width="50" height="52" viewBox="0 0 50 52" fill="none" stroke="#d1d1d1" strokeWidth="4">
          <circle cx="25" cy="26" r="22.500" />
        </svg>
        <svg width="48" height="52" viewBox="0 0 48 52" fill="none" stroke="#d1d1d1" strokeWidth="4.500">
          <rect x="4" y="5" width="40" height="41" rx="1.500" />
        </svg>
      </NavBar>
    </Screen>
  );
}
